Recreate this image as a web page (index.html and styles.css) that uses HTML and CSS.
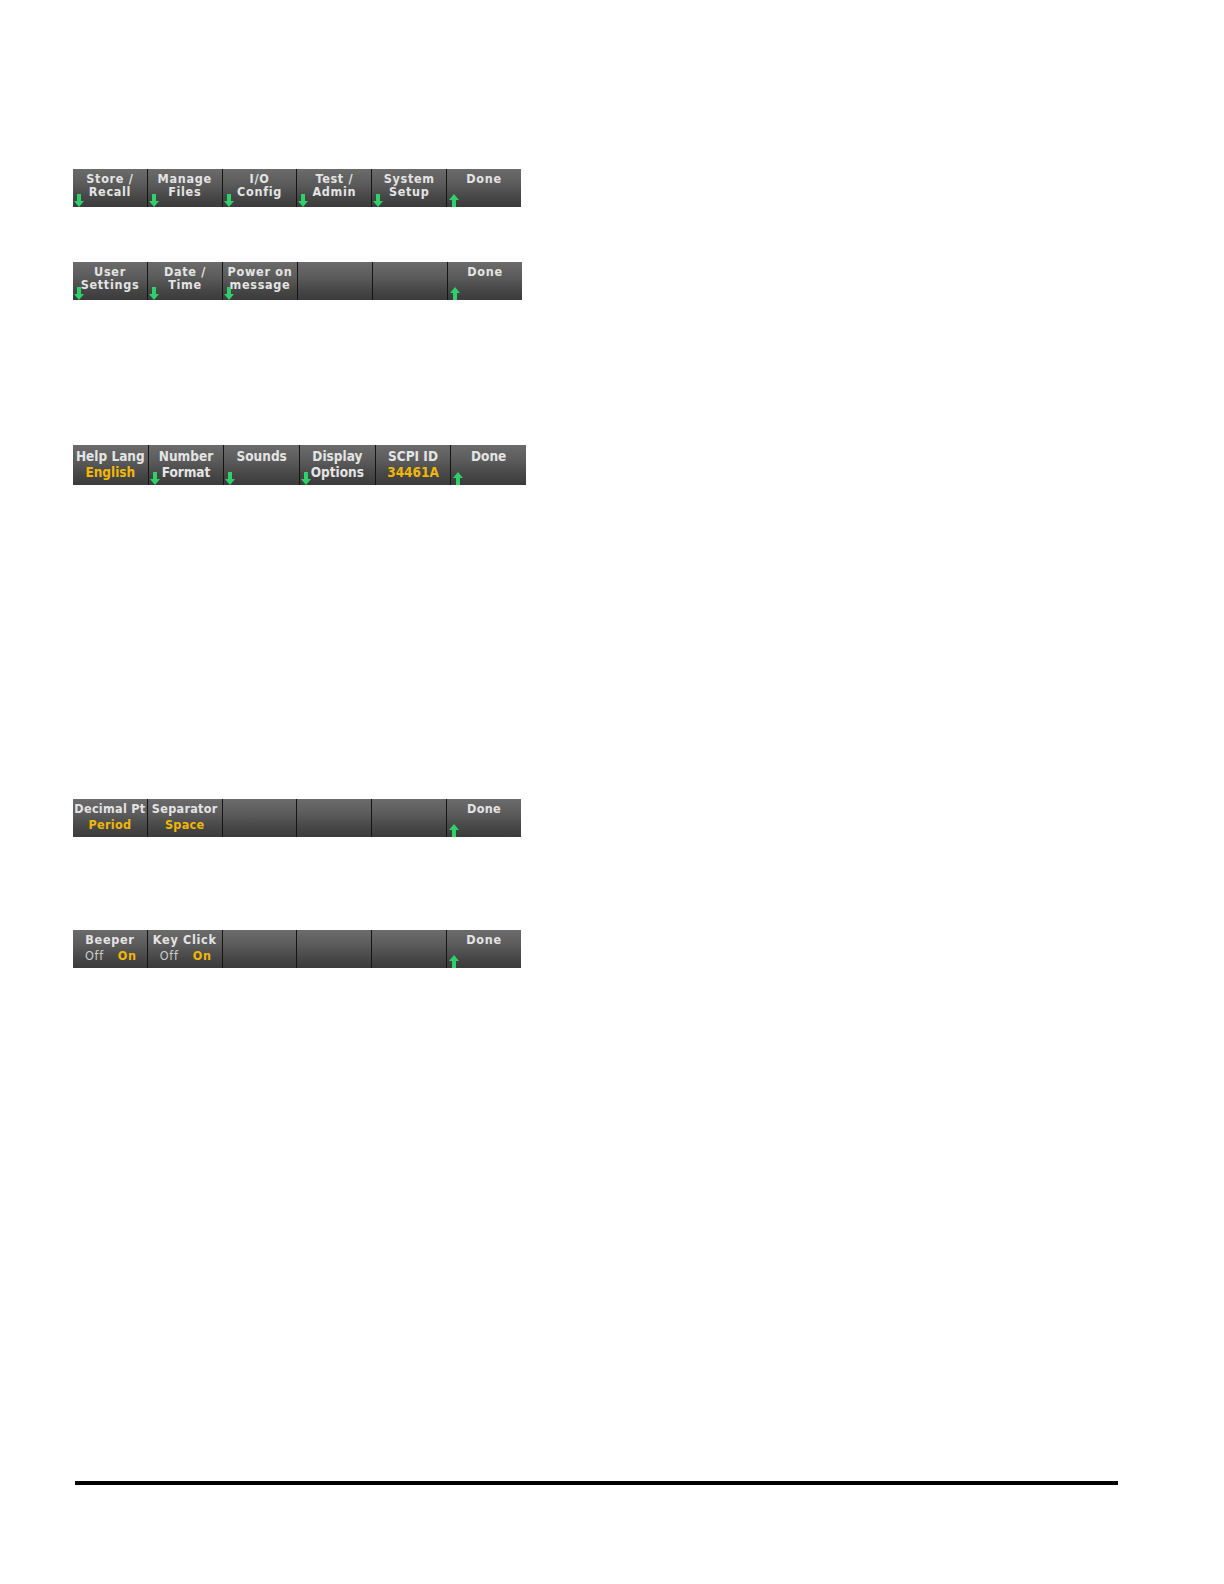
FILE: index.html
```html
<!DOCTYPE html>
<html>
<head>
<meta charset="utf-8">
<link rel="stylesheet" href="styles.css">
</head>
<body>
<div class="page">
  <div class="softkeys bar1">
    <div class="key"><span>Store /</span><span>Recall</span><svg class="arr down" viewBox="0 0 10 13"><path d="M3 0h4v7h3L5 13 0 7h3z"/></svg></div>
    <div class="key"><span>Manage</span><span>Files</span><svg class="arr down" viewBox="0 0 10 13"><path d="M3 0h4v7h3L5 13 0 7h3z"/></svg></div>
    <div class="key"><span>I/O</span><span>Config</span><svg class="arr down" viewBox="0 0 10 13"><path d="M3 0h4v7h3L5 13 0 7h3z"/></svg></div>
    <div class="key"><span>Test /</span><span>Admin</span><svg class="arr down" viewBox="0 0 10 13"><path d="M3 0h4v7h3L5 13 0 7h3z"/></svg></div>
    <div class="key"><span>System</span><span>Setup</span><svg class="arr down" viewBox="0 0 10 13"><path d="M3 0h4v7h3L5 13 0 7h3z"/></svg></div>
    <div class="key"><span>Done</span><svg class="arr up" viewBox="0 0 10 13"><path d="M3 13h4V6h3L5 0 0 6h3z"/></svg></div>
  </div>

  <div class="softkeys bar2">
    <div class="key"><span>User</span><span>Settings</span><svg class="arr down" viewBox="0 0 10 13"><path d="M3 0h4v7h3L5 13 0 7h3z"/></svg></div>
    <div class="key"><span>Date /</span><span>Time</span><svg class="arr down" viewBox="0 0 10 13"><path d="M3 0h4v7h3L5 13 0 7h3z"/></svg></div>
    <div class="key"><span>Power on</span><span>message</span><svg class="arr down" viewBox="0 0 10 13"><path d="M3 0h4v7h3L5 13 0 7h3z"/></svg></div>
    <div class="key"></div>
    <div class="key"></div>
    <div class="key"><span>Done</span><svg class="arr up" viewBox="0 0 10 13"><path d="M3 13h4V6h3L5 0 0 6h3z"/></svg></div>
  </div>

  <div class="softkeys bar3">
    <div class="key"><span>Help Lang</span><span class="val">English</span></div>
    <div class="key"><span>Number</span><span>Format</span><svg class="arr down" viewBox="0 0 10 13"><path d="M3 0h4v7h3L5 13 0 7h3z"/></svg></div>
    <div class="key"><span>Sounds</span><span>&nbsp;</span><svg class="arr down" viewBox="0 0 10 13"><path d="M3 0h4v7h3L5 13 0 7h3z"/></svg></div>
    <div class="key"><span>Display</span><span>Options</span><svg class="arr down" viewBox="0 0 10 13"><path d="M3 0h4v7h3L5 13 0 7h3z"/></svg></div>
    <div class="key"><span>SCPI ID</span><span class="val">34461A</span></div>
    <div class="key"><span>Done</span><svg class="arr up" viewBox="0 0 10 13"><path d="M3 13h4V6h3L5 0 0 6h3z"/></svg></div>
  </div>

  <div class="softkeys bar4">
    <div class="key"><span>Decimal Pt</span><span class="val">Period</span></div>
    <div class="key"><span>Separator</span><span class="val">Space</span></div>
    <div class="key"></div>
    <div class="key"></div>
    <div class="key"></div>
    <div class="key"><span>Done</span><svg class="arr up" viewBox="0 0 10 13"><path d="M3 13h4V6h3L5 0 0 6h3z"/></svg></div>
  </div>

  <div class="softkeys bar5">
    <div class="key"><span>Beeper</span><span class="opts"><span class="off">Off</span><span class="val">On</span></span></div>
    <div class="key"><span>Key Click</span><span class="opts"><span class="off">Off</span><span class="val">On</span></span></div>
    <div class="key"></div>
    <div class="key"></div>
    <div class="key"></div>
    <div class="key"><span>Done</span><svg class="arr up" viewBox="0 0 10 13"><path d="M3 13h4V6h3L5 0 0 6h3z"/></svg></div>
  </div>

  <div class="rule"></div>
</div>
</body>
</html>
```

FILE: styles.css
```css
html, body {
  margin: 0;
  padding: 0;
  background: #ffffff;
}

.page {
  width: 1224px;
  height: 1584px;
  padding-top: 169px;
  box-sizing: border-box;
  display: flex;
  flex-direction: column;
}

.softkeys {
  display: flex;
  margin-left: 73px;
  width: 448px;
  height: 38px;
  background: #111;
  font-family: "DejaVu Sans Condensed", "DejaVu Sans", sans-serif;
  font-weight: bold;
  font-size: 12.5px;
  letter-spacing: 0.7px;
  color: #e4e4e4;
  white-space: nowrap;
}

.bar2 { margin-top: 55px; width: 449px; }
.bar3 { margin-top: 145px; width: 453px; height: 40px; font-size: 13.5px; letter-spacing: 0; }
.bar4 { margin-top: 314px; letter-spacing: 0.3px; }
.bar5 { margin-top: 93px; }

.key {
  position: relative;
  flex: 1;
  min-width: 0;
  display: flex;
  flex-direction: column;
  align-items: center;
  padding-top: 3px;
  line-height: 13px;
  background: linear-gradient(to bottom, #6b6b6b 0%, #5b5b5b 40%, #464646 75%, #3b3b3b 100%);
  border-left: 1.5px solid #141414;
  box-sizing: border-box;
}

.key:first-child { border-left: none; }

.bar3 .key {
  padding-top: 3px;
  line-height: 16px;
}

.val {
  color: #f2b705;
}

.bar4 .val,
.bar5 .opts {
  margin-top: 3px;
}

.opts {
  display: flex;
  gap: 14px;
  padding-left: 2px;
}

.off {
  color: #cdcdcd;
  font-weight: normal;
}

.arr {
  position: absolute;
  left: 1px;
  bottom: 0;
  width: 10px;
  height: 13px;
  fill: #2fcf6a;
}

.arr.up {
  left: 2px;
  bottom: 0;
}

.rule {
  margin-top: 513px;
  margin-left: 75px;
  width: 1043px;
  height: 4px;
  background: #000;
}
```
